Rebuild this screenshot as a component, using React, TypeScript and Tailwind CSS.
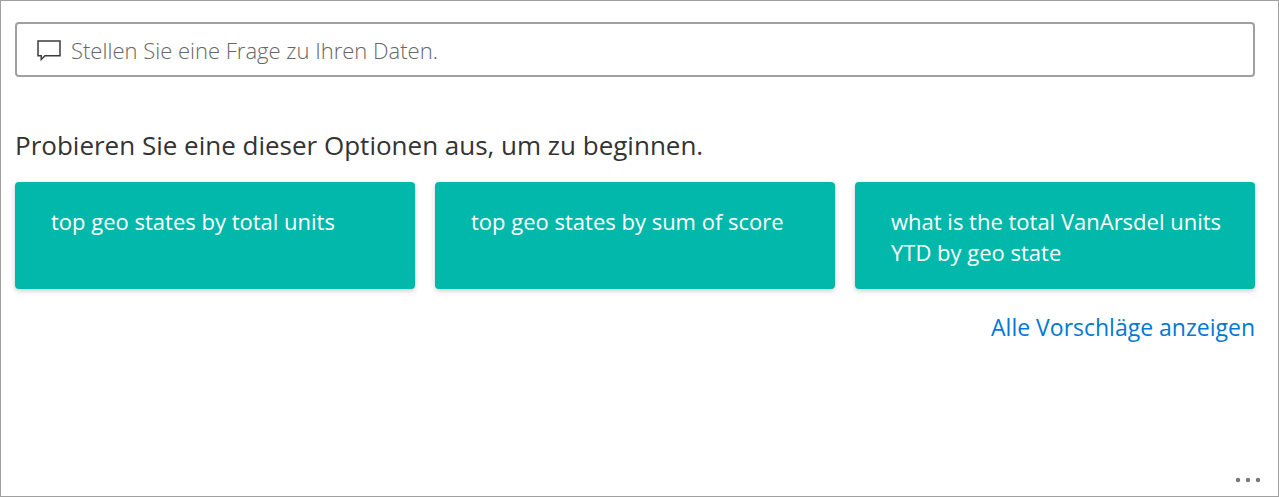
const suggestions = [
  "top geo states by total units",
  "top geo states by sum of score",
  "what is the total VanArsdel units YTD by geo state",
];

function SpeechBubbleIcon() {
  return (
    <svg
      aria-hidden="true"
      className="h-6 w-6 shrink-0"
      viewBox="0 0 24 24"
      fill="none"
      stroke="#3b3b3b"
      strokeWidth="1.5"
    >
      <path d="M1 3H23V17.75H8L4.25 21.5V17.75H1Z" />
    </svg>
  );
}

function MoreIcon() {
  return (
    <svg aria-hidden="true" className="h-1 w-6" viewBox="0 0 24 4" fill="#777777" overflow="visible">
      <circle cx="2" cy="2" r="2.2" />
      <circle cx="12" cy="2" r="2.2" />
      <circle cx="22" cy="2" r="2.2" />
    </svg>
  );
}

export default function App() {
  return (
    <main className="flex min-h-screen flex-col border border-[#a0a0a0] bg-white pt-[21px] pr-[23px] pb-[13px] pl-[14px] font-['Open_Sans','Noto_Sans',sans-serif]">
      <label className="flex items-center gap-2.5 rounded border-2 border-[#a0a0a0] px-5 py-2">
        <SpeechBubbleIcon />
        <input
          type="text"
          aria-label="Frage"
          placeholder="Stellen Sie eine Frage zu Ihren Daten."
          className="h-[35px] min-w-0 flex-1 bg-transparent text-[22px] font-light text-[#333333] outline-none placeholder:text-[#666666]"
        />
      </label>

      <h1 className="mt-12 text-[26px] leading-10 text-[#333333]">
        Probieren Sie eine dieser Optionen aus, um zu beginnen.
      </h1>

      <div className="mt-[17px] grid grid-cols-3 gap-5">
        {suggestions.map((text) => (
          <button
            key={text}
            type="button"
            className="flex min-h-[107px] items-start rounded bg-[#01b8aa] pt-6 pr-8 pb-5 pl-9 text-left text-[22px] leading-[31px] text-white shadow-[0_2px_5px_rgba(0,0,0,0.2)]"
          >
            {text}
          </button>
        ))}
      </div>

      <a href="#alle" className="mt-5 self-end text-[23px] leading-9 text-[#0078d7]">
        Alle Vorschläge anzeigen
      </a>

      <button type="button" aria-label="Weitere Optionen" className="-mr-1.5 mt-auto self-end p-px">
        <MoreIcon />
      </button>
    </main>
  );
}
